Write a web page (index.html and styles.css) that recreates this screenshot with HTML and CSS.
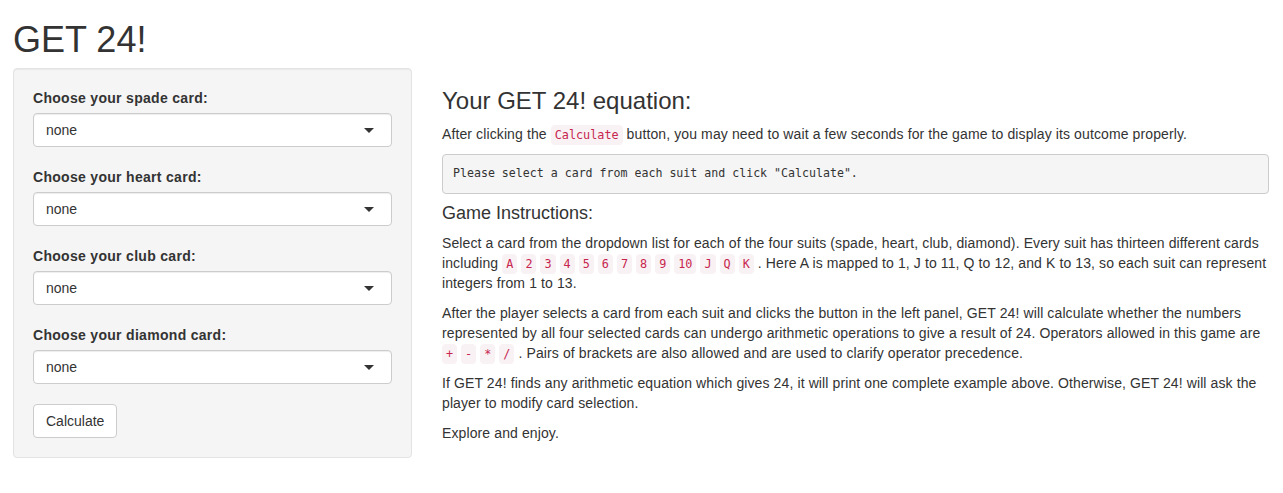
FILE: index.html
```html
<!DOCTYPE html>
<html>
<head>
<meta charset="utf-8">
<title>GET 24!</title>
<link rel="stylesheet" href="styles.css">
</head>
<body>
<div class="page">
  <h2 class="title">GET 24!</h2>
  <div class="row">
    <div class="well">
      <div class="form-group">
        <label class="lbl">Choose your spade card:</label>
        <div class="select"><span>none</span><span class="caret"></span></div>
      </div>
      <div class="form-group">
        <label class="lbl">Choose your heart card:</label>
        <div class="select"><span>none</span><span class="caret"></span></div>
      </div>
      <div class="form-group">
        <label class="lbl">Choose your club card:</label>
        <div class="select"><span>none</span><span class="caret"></span></div>
      </div>
      <div class="form-group">
        <label class="lbl">Choose your diamond card:</label>
        <div class="select"><span>none</span><span class="caret"></span></div>
      </div>
      <button class="btn">Calculate</button>
    </div>
    <div class="main">
      <h3 class="h3">Your GET 24! equation:</h3>
      <p>After clicking the <code>Calculate</code> button, you may need to wait a few seconds for the game to display its outcome properly.</p>
      <pre class="pre">Please select a card from each suit and click "Calculate".</pre>
      <h4 class="h4">Game Instructions:</h4>
      <p>Select a card from the dropdown list for each of the four suits (spade, heart, club, diamond). Every suit has thirteen different cards including <code>A</code> <code>2</code> <code>3</code> <code>4</code> <code>5</code> <code>6</code> <code>7</code> <code>8</code> <code>9</code> <code>10</code> <code>J</code> <code>Q</code> <code>K</code> . Here A is mapped to 1, J to 11, Q to 12, and K to 13, so each suit can represent integers from 1 to 13.</p>
      <p>After the player selects a card from each suit and clicks the button in the left panel, GET 24! will calculate whether the numbers represented by all four selected cards can undergo arithmetic operations to give a result of 24. Operators allowed in this game are <code>+</code> <code>-</code> <code>*</code> <code>/</code> . Pairs of brackets are also allowed and are used to clarify operator precedence.</p>
      <p>If GET 24! finds any arithmetic equation which gives 24, it will print one complete example above. Otherwise, GET 24! will ask the player to modify card selection.</p>
      <p>Explore and enjoy.</p>
    </div>
  </div>
</div>
</body>
</html>
```
FILE: styles.css
```css
* { box-sizing: border-box; }
html, body { margin: 0; padding: 0; background: #fff; }
body {
  font-family: "Liberation Sans", Arial, Helvetica, sans-serif;
  font-size: 14px;
  line-height: 1.42857143;
  color: #333;
}
.page { padding: 0 14px 0 13px; }
.title {
  font-size: 36px;
  font-weight: 500;
  line-height: 1.1;
  margin: 20px 0 8px;
}
.row { display: flex; gap: 30px; align-items: flex-start; }
.well {
  width: 399px;
  flex: none;
  background: #f5f5f5;
  border: 1px solid #e3e3e3;
  border-radius: 4px;
  box-shadow: inset 0 1px 1px rgba(0,0,0,0.05);
  padding: 19px;
  min-height: 20px;
}
.form-group { margin-bottom: 20px; }
.lbl {
  display: block;
  font-weight: bold;
  margin-bottom: 5px;
  letter-spacing: 0.3px;
}
.select {
  height: 34px;
  background: #fff;
  border: 1px solid #ccc;
  border-radius: 4px;
  box-shadow: inset 0 1px 1px rgba(0,0,0,0.075);
  padding: 6px 12px;
  display: flex;
  align-items: center;
  justify-content: space-between;
}
.caret {
  width: 0;
  height: 0;
  border-style: solid;
  border-width: 5px 5px 0 5px;
  border-color: #333 transparent transparent transparent;
  margin-right: 5px;
  margin-top: 1px;
}
.btn {
  font-family: inherit;
  font-size: 14px;
  line-height: 1.42857143;
  color: #333;
  background: #fff;
  border: 1px solid #ccc;
  border-radius: 4px;
  padding: 6px 12px;
  height: 34px;
  cursor: pointer;
}
.main { flex: 1; min-width: 0; }
.h3 {
  font-size: 24px;
  font-weight: 500;
  line-height: 1.1;
  margin: 20px 0 10px;
}
.h4 {
  font-size: 18px;
  font-weight: 500;
  line-height: 1.1;
  margin: 10px 0 10px;
}
p { margin: 0 0 10px; letter-spacing: 0.11px; }
code {
  font-family: "DejaVu Sans Mono", "Liberation Mono", monospace;
  font-size: 11.8px;
  letter-spacing: 0;
  padding: 3px 4px;
  color: #c7254e;
  background: #f9f2f4;
  border-radius: 4px;
}
.pre {
  display: block;
  font-family: "DejaVu Sans Mono", "Liberation Mono", monospace;
  font-size: 11.6px;
  line-height: 18.57px;
  color: #333;
  background: #f5f5f5;
  border: 1px solid #ccc;
  border-radius: 4px;
  padding: 9.5px 10px;
  margin: 0 0 10px;
  white-space: pre-wrap;
}
```
